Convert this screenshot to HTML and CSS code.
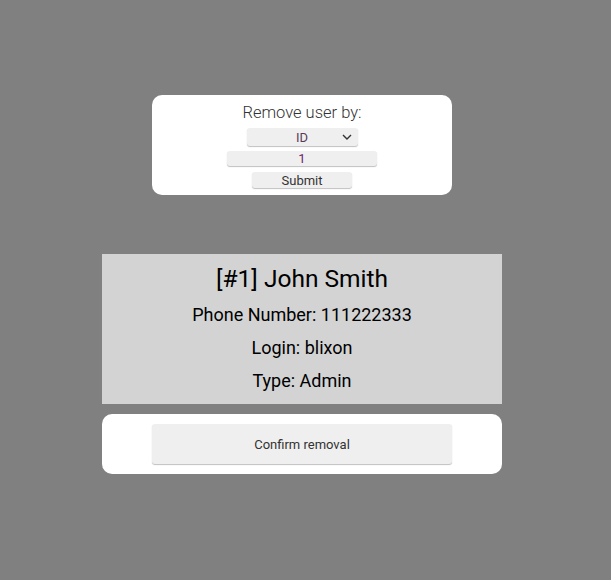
FILE: index.html
```html
<!DOCTYPE html>
<html>
<head>
<meta charset="utf-8">
<link rel="stylesheet" href="styles.css">
</head>
<body>
<div class="page">
  <div class="card form-card">
    <div class="label">Remove user by:</div>
    <div class="select">
      <span>ID</span>
      <svg class="chev" width="10" height="6" viewBox="0 0 10 6"><path d="M1 1 L5 5 L9 1" fill="none" stroke="#333" stroke-width="1.4"/></svg>
    </div>
    <div class="input">1</div>
    <div class="btn-small">Submit</div>
  </div>
  <div class="info">
    <div class="name">[#1] John Smith</div>
    <div class="line first">Phone Number: 111222333</div>
    <div class="line">Login: blixon</div>
    <div class="line">Type: Admin</div>
  </div>
  <div class="card confirm-card">
    <div class="btn-confirm">Confirm removal</div>
  </div>
</div>
</body>
</html>
```
FILE: styles.css
```css
* { box-sizing: border-box; }
html, body { margin: 0; padding: 0; }
body {
  background: #808080;
  font-family: Roboto, "Noto Sans", sans-serif;
  color: #000;
}
.page {
  display: flex;
  flex-direction: column;
  align-items: center;
  padding-top: 95px;
  padding-right: 7px;
}
.card {
  background: #fff;
  border-radius: 10px;
}
.form-card {
  width: 300px;
  height: 100px;
  display: flex;
  flex-direction: column;
  align-items: center;
  padding-top: 8px;
}
.label {
  font-size: 16.5px;
  line-height: 20px;
  color: #333;
  font-weight: 300;
}
.select, .input, .btn-small {
  background: #efefef;
  border-radius: 3px;
  box-shadow: 0 1px 1px rgba(0,0,0,0.25);
  font-size: 13px;
  color: #444;
  display: flex;
  align-items: center;
  justify-content: center;
  position: relative;
}
.select {
  width: 111px;
  height: 18px;
  margin-top: 5px;
  color: #5a3a5a;
}
.chev { position: absolute; right: 6px; top: 6px; }
.input {
  width: 150px;
  height: 15px;
  margin-top: 5px;
  color: #6a2a6a;
}
.btn-small {
  width: 100px;
  height: 16px;
  margin-top: 6px;
  color: #333;
}
.info {
  margin-top: 59px;
  width: 400px;
  height: 150px;
  background: #d3d3d3;
  display: flex;
  flex-direction: column;
  align-items: center;
  padding-top: 10px;
}
.name {
  font-size: 24.5px;
  line-height: 30px;
}
.line {
  font-size: 18px;
  line-height: 33px;
}
.line.first { margin-top: 4px; }
.confirm-card {
  margin-top: 10px;
  width: 400px;
  height: 60px;
  display: flex;
  align-items: center;
  justify-content: center;
}
.btn-confirm {
  width: 300px;
  height: 40px;
  background: #efefef;
  border-radius: 3px;
  box-shadow: 0 1px 1px rgba(0,0,0,0.25);
  display: flex;
  align-items: center;
  justify-content: center;
  font-size: 13px;
  color: #333;
}
```
